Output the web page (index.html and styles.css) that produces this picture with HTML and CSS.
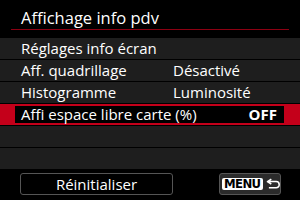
FILE: index.html
```html
<!DOCTYPE html>
<html>
<head>
<meta charset="utf-8">
<link rel="stylesheet" href="styles.css">
</head>
<body>
<div class="screen">
  <div class="header"><span class="title">Affichage info pdv</span></div>
  <div class="list">
    <div class="row"><span class="label">Réglages info écran</span><span class="value"></span></div>
    <div class="row"><span class="label">Aff. quadrillage</span><span class="value">Désactivé</span></div>
    <div class="row"><span class="label">Histogramme</span><span class="value">Luminosité</span></div>
    <div class="row sel"><div class="inner"><span class="label">Affi espace libre carte (%)</span><span class="value bold">OFF</span></div></div>
    <div class="row"></div>
    <div class="row"></div>
  </div>
  <div class="footer">
    <div class="btn reset">Réinitialiser</div>
    <div class="btn menu"><span class="menutag">MENU</span>
      <svg class="ret" width="15" height="12" viewBox="0 0 15 12"><path d="M5.5 1 L1.5 3.5 L5.5 6 M1.8 3.5 H10.5 A3.2 3.2 0 0 1 10.5 9.9 H3" fill="none" stroke="#fff" stroke-width="1.6" stroke-linejoin="round"/></svg>
    </div>
  </div>
</div>
</body>
</html>
```
FILE: styles.css
```css
html, body {
  margin: 0;
  padding: 0;
  background: #000;
}
.screen {
  width: 300px;
  height: 200px;
  background: #000;
  color: #fff;
  font-family: "Open Sans", Roboto, sans-serif;
  font-size: 15px;
  overflow: hidden;
}
.header {
  margin: 0 11px;
  height: 29px;
  border-bottom: 1px solid #8c0012;
  display: flex;
  align-items: flex-end;
  padding-left: 10px;
}
.title {
  line-height: 18px;
  padding-bottom: 2px;
  font-size: 16.5px;
}
.list {
  margin-top: 8px;
  display: flex;
  flex-direction: column;
  gap: 1px;
}
.row {
  height: 21px;
  background: #1e1e1e;
  display: grid;
  grid-template-columns: 152px 1fr;
  padding-left: 21px;
  align-items: center;
  line-height: 21px;
}
.row.sel {
  background: #c4001a;
  padding: 2px 16px 2px 15px;
  display: block;
  box-sizing: border-box;
}
.inner {
  background: #000;
  height: 17px;
  display: flex;
  justify-content: space-between;
  align-items: center;
  padding: 0 7px 0 6px;
  line-height: 17px;
}
.bold {
  font-weight: bold;
}
.footer {
  display: flex;
  justify-content: space-between;
  padding: 4px 19px 0 19px;
}
.btn {
  height: 22px;
  box-sizing: border-box;
  border: 1px solid #555;
  border-radius: 3px;
  display: flex;
  align-items: center;
  justify-content: center;
}
.reset {
  width: 153px;
  margin-left: 1px;
}
.menu {
  width: 62px;
  background: #2b2b2b;
  gap: 3px;
  justify-content: flex-start;
  padding-left: 2px;
}
.menutag {
  background: #fff;
  color: #000;
  font-weight: bold;
  font-size: 13px;
  line-height: 12px;
  height: 12px;
  padding: 0 2px;
  border-radius: 2px;
  letter-spacing: -0.6px;
  font-family: "DejaVu Sans Condensed", Roboto, sans-serif;
}
.ret {
  display: block;
}
```
